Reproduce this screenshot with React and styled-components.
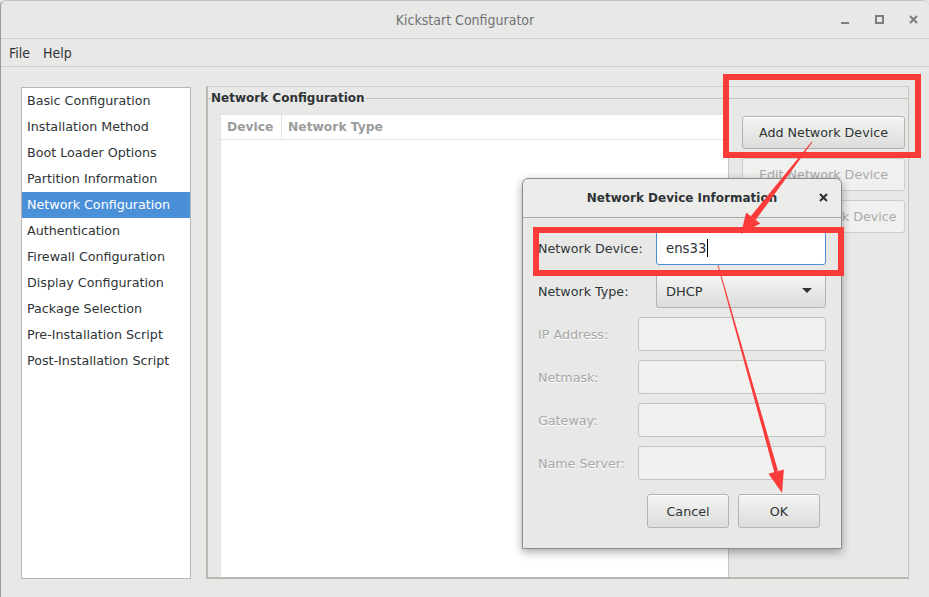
import React from 'react'
import styled, { createGlobalStyle } from 'styled-components'

const GlobalStyle = createGlobalStyle`
  html, body {
    margin: 0;
    padding: 0;
    background: #e8e8e7;
    overflow: hidden;
  }
  body {
    font-family: "DejaVu Sans", "Liberation Sans", sans-serif;
    font-size: 12.7px;
    color: #2e3436;
  }
`

const Window = styled.div`
  position: relative;
  width: 929px;
  height: 597px;
  box-sizing: border-box;
  background: #e8e8e7;
  border-left: 1px solid #9a9a9a;
  border-top: 1px solid #c4c4c2;
  border-radius: 6px 6px 0 0;
  display: flex;
  flex-direction: column;
  overflow: hidden;
`

const TitleBar = styled.div`
  height: 37px;
  flex: none;
  display: flex;
  align-items: center;
  justify-content: center;
  position: relative;
  border-bottom: 1px solid #cfcfcd;
  font-family: "DejaVu Sans Condensed", "DejaVu Sans", sans-serif;
  font-stretch: condensed;
  font-size: 14px;
  color: #6f7273;
`

const Controls = styled.div`
  position: absolute;
  right: 11px;
  top: 14px;
  display: flex;
  gap: 25px;
  align-items: center;
`

const MenuBar = styled.div`
  height: 27px;
  flex: none;
  display: flex;
  align-items: center;
  gap: 13px;
  padding-left: 8px;
  border-bottom: 1px solid #cfcfcd;
  font-family: "DejaVu Sans Condensed", "DejaVu Sans", sans-serif;
  font-stretch: condensed;
  font-size: 14px;
  color: #2e3436;
`

const Content = styled.div`
  flex: 1;
  display: flex;
  gap: 15px;
  padding: 20px 20px 18px 20px;
  min-height: 0;
`

const Sidebar = styled.ul`
  list-style: none;
  margin: 0;
  padding: 0;
  width: 168px;
  flex: none;
  background: #fff;
  border: 1px solid #b6b6b3;
`

const SideItem = styled.li`
  height: 26px;
  line-height: 26px;
  padding-left: 5px;
  white-space: nowrap;
  background: ${p => (p.$active ? '#4a90d9' : 'transparent')};
  color: ${p => (p.$active ? '#ffffff' : '#2e3436')};
`

const Frame = styled.div`
  flex: 1;
  margin-top: -1px;
  display: flex;
  flex-direction: column;
  padding-top: 11px;
  border-top: 1px solid #cdcdca;
  border-right: 1px solid #c3c3c0;
  border-left: 2px solid #b8b8b5;
  border-bottom: 2px solid #b8b8b5;
`

const Inner = styled.div`
  position: relative;
  flex: 1;
  display: flex;
  border-top: 1px solid #c3c3c0;
  min-height: 0;
`

const Legend = styled.div`
  position: absolute;
  left: 3px;
  top: -9px;
  padding-right: 1px;
  background: #e8e8e7;
  font-weight: bold;
  font-size: 12px;
  line-height: 16px;
  color: #2e3436;
`

const TreeArea = styled.div`
  flex: 1;
  display: flex;
  padding: 15px 0 0 12px;
`

const Tree = styled.div`
  flex: 1;
  background: #fff;
  border-top: 1px solid #e2e2e0;
  border-left: 1px solid #e2e2e0;
`

const TreeHeader = styled.div`
  display: flex;
  height: 24px;
  border-bottom: 1px solid #e4e4e2;
`

const HeadCell = styled.div`
  width: ${p => p.$w || 'auto'};
  flex: ${p => (p.$w ? 'none' : '1')};
  padding-left: 6px;
  line-height: 24px;
  font-weight: bold;
  font-size: 12.3px;
  color: #9a9c9c;
  border-right: ${p => (p.$w ? '1px solid #e4e4e2' : 'none')};
`

const SidePanel = styled.div`
  width: 163px;
  flex: none;
  border-left: 1px solid #c3c3c0;
  padding: 17px 3px 0 13px;
  display: flex;
  flex-direction: column;
  gap: 9px;
`

const Button = styled.div`
  box-sizing: border-box;
  height: ${p => p.$h || '33px'};
  width: ${p => p.$w || 'auto'};
  display: flex;
  align-items: center;
  justify-content: center;
  border-radius: 3px;
  border: 1px solid ${p => (p.$disabled ? '#cdcdcb' : '#b3b3b0')};
  background: ${p =>
    p.$disabled ? '#f0f0ef' : 'linear-gradient(#f4f4f3, #dcdcda)'};
  color: ${p => (p.$disabled ? '#a9abab' : '#2e3436')};
  box-shadow: ${p => (p.$disabled ? 'none' : 'inset 0 1px #ffffff')};
  white-space: nowrap;
`

const Dialog = styled.div`
  position: absolute;
  left: 521px;
  top: 177px;
  width: 320px;
  height: 371px;
  box-sizing: border-box;
  background: #e8e8e7;
  border: 1px solid #8c8c8c;
  border-radius: 6px 6px 0 0;
  box-shadow: 0 3px 10px rgba(0, 0, 0, 0.35);
  display: flex;
  flex-direction: column;
`

const DialogTitle = styled.div`
  height: 38px;
  flex: none;
  position: relative;
  display: flex;
  align-items: center;
  justify-content: center;
  font-weight: bold;
  font-size: 12px;
  color: #2e3436;
  border-bottom: 1px solid #a7a7a5;
  border-radius: 6px 6px 0 0;
  background: #ececeb;
`

const CloseX = styled.div`
  position: absolute;
  right: 12px;
  top: 13px;
  line-height: 0;
`

const DialogBody = styled.div`
  flex: 1;
  display: flex;
  flex-direction: column;
  padding: 13px 15px 20px 15px;
`

const FormGrid = styled.div`
  display: grid;
  grid-template-columns: ${p => p.$label} 1fr;
  row-gap: 9px;
  margin-bottom: 9px;
  align-items: center;
`

const Label = styled.div`
  color: ${p => (p.$disabled ? '#a5a7a7' : '#2e3436')};
  text-shadow: ${p => (p.$disabled ? '0 1px #ffffff' : 'none')};
  white-space: nowrap;
`

const Entry = styled.div`
  box-sizing: border-box;
  height: 34px;
  display: flex;
  align-items: center;
  padding-left: 9px;
  border-radius: 3px;
  border: 1px solid ${p => (p.$focus ? '#4a90d9' : '#c2c2bf')};
  background: ${p => (p.$focus ? '#ffffff' : '#f1f1f0')};
  color: #2e3436;
  font-size: 13.3px;
`

const Caret = styled.span`
  display: inline-block;
  width: 1px;
  height: 18px;
  background: #000;
  margin-left: 1px;
`

const Combo = styled(Button)`
  justify-content: space-between;
  padding: 0 13px 0 9px;
  font-size: 13px;
`

const DialogButtons = styled.div`
  display: flex;
  justify-content: flex-end;
  gap: 9px;
  margin-top: auto;
  padding-right: 6px;
`

const Marker = styled.div`
  position: absolute;
  left: ${p => p.$x}px;
  top: ${p => p.$y}px;
  width: ${p => p.$w}px;
  height: ${p => p.$h}px;
  box-sizing: border-box;
  border: 6px solid #fb3a3a;
  pointer-events: none;
`

const ArrowLayer = styled.svg`
  position: absolute;
  left: -1px;
  top: -1px;
  width: 929px;
  height: 597px;
  pointer-events: none;
`

const items = [
  'Basic Configuration',
  'Installation Method',
  'Boot Loader Options',
  'Partition Information',
  'Network Configuration',
  'Authentication',
  'Firewall Configuration',
  'Display Configuration',
  'Package Selection',
  'Pre-Installation Script',
  'Post-Installation Script',
]

const WindowControls = () => (
  <Controls>
    <svg width="9" height="9" viewBox="0 0 9 9">
      <rect x="0" y="7" width="8" height="2" fill="#7b7d7e" />
    </svg>
    <svg width="9" height="9" viewBox="0 0 9 9">
      <rect x="1" y="1" width="7" height="7" fill="none" stroke="#7b7d7e" strokeWidth="2" />
    </svg>
    <svg width="9" height="9" viewBox="0 0 9 9">
      <path d="M1 1 L8 8 M8 1 L1 8" stroke="#7b7d7e" strokeWidth="2" />
    </svg>
  </Controls>
)

export default function App() {
  return (
    <>
      <GlobalStyle />
      <Window>
        <TitleBar>
          Kickstart Configurator
          <WindowControls />
        </TitleBar>
        <MenuBar>
          <span>File</span>
          <span>Help</span>
        </MenuBar>
        <Content>
          <Sidebar>
            {items.map(name => (
              <SideItem key={name} $active={name === 'Network Configuration'}>
                {name}
              </SideItem>
            ))}
          </Sidebar>
          <Frame>
            <Inner>
              <Legend>Network Configuration</Legend>
              <TreeArea>
                <Tree>
                  <TreeHeader>
                    <HeadCell $w="54px">Device</HeadCell>
                    <HeadCell>Network Type</HeadCell>
                  </TreeHeader>
                </Tree>
              </TreeArea>
              <SidePanel>
                <Button>Add Network Device</Button>
                <Button $disabled>Edit Network Device</Button>
                <Button $disabled>Delete Network Device</Button>
              </SidePanel>
            </Inner>
          </Frame>
        </Content>

        <Dialog>
          <DialogTitle>
            Network Device Information
            <CloseX>
              <svg width="11" height="11" viewBox="0 0 11 11">
                <path d="M2 2 L9 9 M9 2 L2 9" stroke="#2e3436" strokeWidth="2.2" />
              </svg>
            </CloseX>
          </DialogTitle>
          <DialogBody>
            <FormGrid $label="118px">
              <Label>Network Device:</Label>
              <Entry $focus>
                ens33<Caret />
              </Entry>
              <Label>Network Type:</Label>
              <Combo $h="34px">
                <span>DHCP</span>
                <svg width="10" height="6" viewBox="0 0 10 6">
                  <path d="M0 0 H10 L5 5 Z" fill="#2e3436" />
                </svg>
              </Combo>
            </FormGrid>
            <FormGrid $label="100px">
              <Label $disabled>IP Address:</Label>
              <Entry />
              <Label $disabled>Netmask:</Label>
              <Entry />
              <Label $disabled>Gateway:</Label>
              <Entry />
              <Label $disabled>Name Server:</Label>
              <Entry />
            </FormGrid>
            <DialogButtons>
              <Button $w="82px" $h="34px">Cancel</Button>
              <Button $w="82px" $h="34px">OK</Button>
            </DialogButtons>
          </DialogBody>
        </Dialog>

        <Marker $x={722} $y={73} $w={198} $h={84} />
        <Marker $x={532} $y={226} $w={311} $h={49} />
        <ArrowLayer viewBox="0 0 929 597">
          <polygon
            points="812.4,142.3 811.6,141.7 750.8,216.3 755.6,220"
            fill="#fb3a3a"
          />
          <polygon points="741,234 746.1,212.6 760.3,223.6" fill="#fb3a3a" />
          <polygon
            points="718.4,265 717.6,265.2 774.3,472.2 778.1,471.2"
            fill="#fb3a3a"
          />
          <polygon points="782,493 768.5,473.8 783.9,469.6" fill="#fb3a3a" />
        </ArrowLayer>
      </Window>
    </>
  )
}
